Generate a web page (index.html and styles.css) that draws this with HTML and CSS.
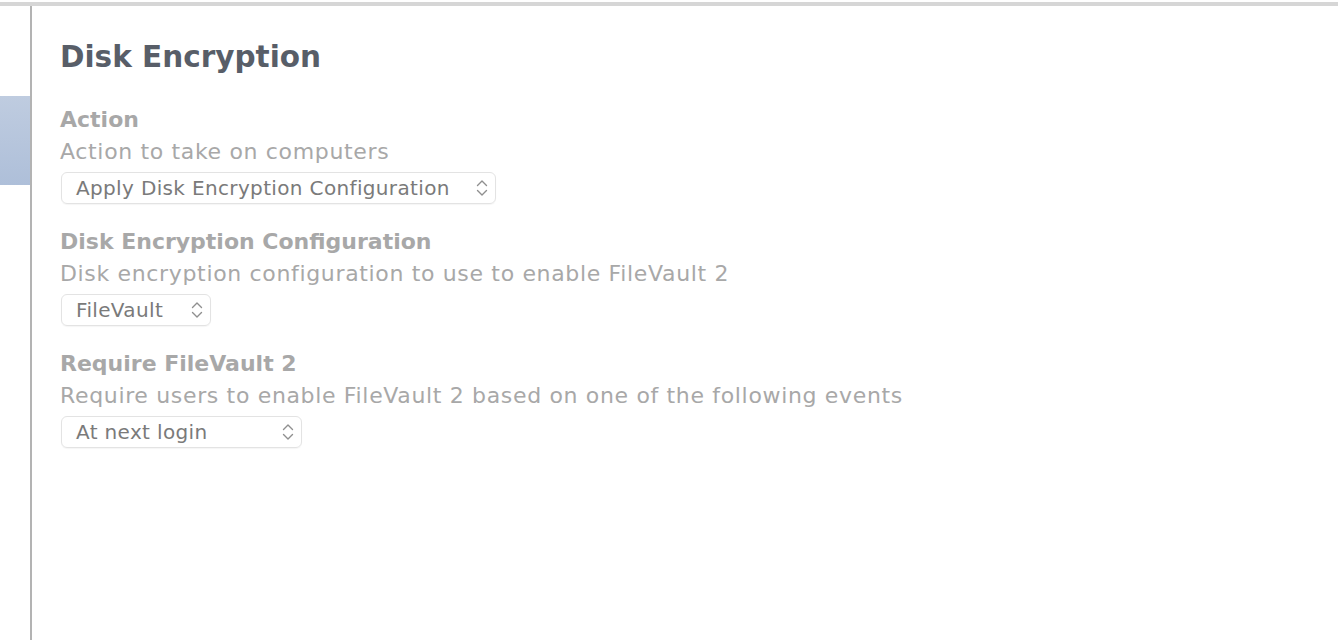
FILE: index.html
```html
<!DOCTYPE html>
<html>
<head>
<meta charset="utf-8">
<link rel="stylesheet" href="styles.css">
</head>
<body>
<div class="topbar"></div>
<div class="layout">
  <aside class="sidebar">
    <div class="selected"></div>
  </aside>
  <main class="content">
    <h1 class="title">Disk Encryption</h1>
    <section class="field">
      <div class="label">Action</div>
      <div class="desc">Action to take on computers</div>
      <div class="select w1"><span>Apply Disk Encryption Configuration</span><svg class="arrows" viewBox="0 0 14 20" width="14" height="20"><path d="M2.5 7.5 L7 3 L11.5 7.5 M2.5 12.5 L7 17 L11.5 12.5" fill="none" stroke="#8f8f8f" stroke-width="1.4" stroke-linecap="round" stroke-linejoin="round"/></svg></div>
    </section>
    <section class="field">
      <div class="label">Disk Encryption Configuration</div>
      <div class="desc">Disk encryption configuration to use to enable FileVault 2</div>
      <div class="select w2"><span>FileVault</span><svg class="arrows" viewBox="0 0 14 20" width="14" height="20"><path d="M2.5 7.5 L7 3 L11.5 7.5 M2.5 12.5 L7 17 L11.5 12.5" fill="none" stroke="#8f8f8f" stroke-width="1.4" stroke-linecap="round" stroke-linejoin="round"/></svg></div>
    </section>
    <section class="field">
      <div class="label">Require FileVault 2</div>
      <div class="desc">Require users to enable FileVault 2 based on one of the following events</div>
      <div class="select w3"><span>At next login</span><svg class="arrows" viewBox="0 0 14 20" width="14" height="20"><path d="M2.5 7.5 L7 3 L11.5 7.5 M2.5 12.5 L7 17 L11.5 12.5" fill="none" stroke="#8f8f8f" stroke-width="1.4" stroke-linecap="round" stroke-linejoin="round"/></svg></div>
    </section>
  </main>
</div>
</body>
</html>
```
FILE: styles.css
```css
html, body {
  margin: 0;
  padding: 0;
  background: #ffffff;
  height: 640px;
  overflow: hidden;
}
body {
  font-family: "DejaVu Sans", "Open Sans", sans-serif;
}
.topbar {
  margin-top: 2px;
  height: 4px;
  background: #d6d6d6;
}
.layout {
  display: flex;
  height: 634px;
}
.sidebar {
  width: 30px;
  border-right: 2px solid #b3b3b3;
  padding-top: 90px;
  box-sizing: content-box;
}
.selected {
  height: 89px;
  background: linear-gradient(#bfcce0, #aebfd9);
}
.content {
  flex: 1;
  padding-left: 28px;
  padding-top: 33px;
}
.title {
  margin: 0 0 29px 0;
  font-size: 29.5px;
  font-weight: bold;
  color: #585e68;
  line-height: 36px;
}
.field {
  margin-bottom: 22px;
}
.label {
  font-size: 22px;
  font-weight: bold;
  color: #a8a8a8;
  line-height: 32px;
}
.desc {
  font-size: 22px;
  letter-spacing: 0.66px;
  color: #a8a8a8;
  line-height: 32px;
}
.select {
  margin-top: 4px;
  margin-left: 1px;
  height: 32px;
  box-sizing: border-box;
  border: 1px solid #e3e3e3;
  border-radius: 6px;
  display: flex;
  align-items: center;
  justify-content: space-between;
  padding: 0 6px 0 14px;
  font-size: 20px;
  letter-spacing: 0.35px;
  color: #7a7a7a;
  box-shadow: 0 1px 1px rgba(0,0,0,0.04);
}
.w1 { width: 435px; }
.w2 { width: 150px; }
.w3 { width: 241px; }
.arrows { flex: none; }
```
